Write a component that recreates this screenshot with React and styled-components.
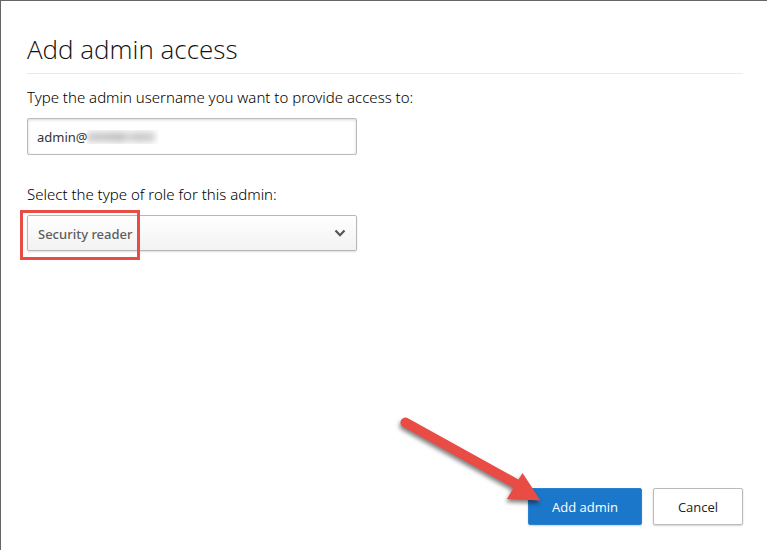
import React from "react";
import styled, { createGlobalStyle } from "styled-components";

const GlobalStyle = createGlobalStyle`
  *, *::before, *::after { box-sizing: border-box; }
  body {
    margin: 0;
    background: #fff;
    color: #333;
    font-family: "Noto Sans", "Open Sans", sans-serif;
  }
`;

const Dialog = styled.form`
  display: flex;
  flex-direction: column;
  min-height: 100vh;
  padding: 24px 24px 25px 26px;
  border-top: 1px solid #666;
  border-left: 1px solid #666;
  background: #fff;
`;

const Title = styled.h1`
  margin: 0 0 12px;
  height: 49px;
  border-bottom: 1px solid #eaeaea;
  color: #111;
  font-family: "Open Sans", "Noto Sans", sans-serif;
  font-size: 26px;
  font-weight: 300;
  line-height: 48px;
`;

const Field = styled.div`
  display: flex;
  flex-direction: column;
  margin-bottom: 28px;
`;

const Label = styled.label`
  margin-bottom: 10px;
  color: #000;
  font-size: 15px;
  font-weight: 300;
  line-height: 22px;
`;

const Control = styled.div`
  position: relative;
  width: 100%;
  max-width: 330px;
`;

const TextInput = styled.input`
  display: block;
  width: 100%;
  height: 37px;
  padding: 0 9px;
  border: 1px solid #bababa;
  border-radius: 2px;
  box-shadow: inset 0 1px 3px rgba(0, 0, 0, 0.16);
  background: #fff;
  color: #333;
  font-family: inherit;
  font-size: 13px;
`;

const Redaction = styled.span`
  position: absolute;
  top: 12px;
  left: 60px;
  width: 72px;
  height: 14px;
  overflow: hidden;
  pointer-events: none;

  &::before {
    content: "";
    position: absolute;
    inset: 2px 4px 2px 0;
    background: linear-gradient(
      90deg, #ccc 0, #c8c8c8 20px, #c0c0c0 34px, #d8d8d8 41px, #c8c8c8 50px, #d0d0d0 100%
    );
    filter: blur(3px);
  }
`;

const Select = styled.select`
  display: block;
  width: 100%;
  height: 36px;
  padding: 1px 36px 0 10px;
  appearance: none;
  border: 1px solid #b8b8b8;
  border-radius: 2px;
  box-shadow: 0 1px 2px rgba(0, 0, 0, 0.14);
  background: linear-gradient(#fff, #f2f2f2);
  color: #5e5e5e;
  font-family: inherit;
  font-size: 13px;
  font-weight: 500;
`;

const Chevron = styled.svg`
  position: absolute;
  top: 14px;
  right: 11px;
  width: 12px;
  height: 9px;
  pointer-events: none;
`;

const Highlight = styled.span`
  position: absolute;
  top: -5px;
  left: -7px;
  width: 120px;
  height: 50px;
  border: 3px solid #e94b45;
  pointer-events: none;
`;

const Footer = styled.footer`
  position: relative;
  display: flex;
  justify-content: flex-end;
  gap: 11px;
  margin-top: auto;
`;

const Button = styled.button`
  width: ${(p) => (p.$primary ? "114px" : "90px")};
  height: 37px;
  padding: 0;
  border: 1px solid ${(p) => (p.$primary ? "#2b80cf" : "#bababa")};
  border-radius: 2px;
  box-shadow: 0 1px 2px rgba(0, 0, 0, 0.18);
  background: ${(p) => (p.$primary ? "#1b77c9" : "#fff")};
  color: ${(p) => (p.$primary ? "#fff" : "#222")};
  font-family: "Open Sans", "Noto Sans", sans-serif;
  font-size: 13px;
`;

const Arrow = styled.svg`
  position: absolute;
  right: 193px;
  bottom: 5px;
  width: 160px;
  height: 110px;
  pointer-events: none;
  filter: drop-shadow(-1px 3px 2px rgba(0, 0, 0, 0.5));
`;

export default function App() {
  return (
    <>
      <GlobalStyle />
      <Dialog onSubmit={(e) => e.preventDefault()}>
        <Title>Add admin access</Title>
        <Field>
          <Label htmlFor="username">Type the admin username you want to provide access to:</Label>
          <Control>
            <TextInput id="username" type="text" defaultValue="admin@" />
            <Redaction aria-hidden="true" />
          </Control>
        </Field>
        <Field>
          <Label htmlFor="role">Select the type of role for this admin:</Label>
          <Control>
            <Select id="role">
              <option>Security reader</option>
            </Select>
            <Chevron viewBox="0 0 12 9" aria-hidden="true">
              <path d="M1.5 1.5 6 6.2 10.5 1.5" fill="none" stroke="#555" strokeWidth="2.2" />
            </Chevron>
            <Highlight />
          </Control>
        </Field>
        <Footer>
          <Button type="submit" $primary>Add admin</Button>
          <Button type="button">Cancel</Button>
          <Arrow viewBox="390 410 160 110" aria-hidden="true">
            <path d="M405.5 422.5 520 486" stroke="#e94b45" strokeWidth="10" strokeLinecap="round" />
            <path d="M522.5 473 540.5 500.5 507 499Z" fill="#e94b45" />
          </Arrow>
        </Footer>
      </Dialog>
    </>
  );
}
